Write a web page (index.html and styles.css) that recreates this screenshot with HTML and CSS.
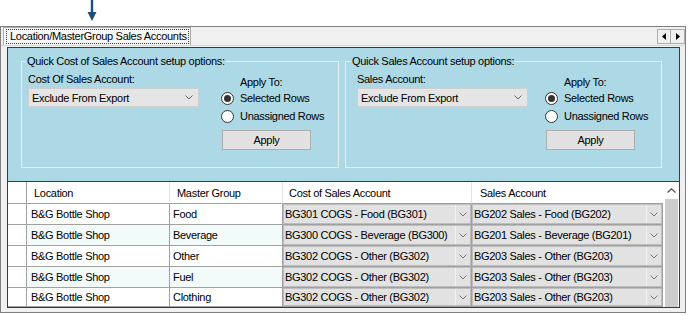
FILE: index.html
```html
<!DOCTYPE html>
<html>
<head>
<meta charset="utf-8">
<link rel="stylesheet" href="styles.css">
</head>
<body>
<div class="pointer">
  <svg width="12" height="22" viewBox="0 0 12 22"><line x1="6" y1="0" x2="6" y2="14" stroke="#1f4e79" stroke-width="2.4"/><polygon points="1.5,12 10.5,12 6,21" fill="#1f4e79"/></svg>
</div>
<div class="window">
  <div class="tabstrip">
    <div class="tab"><span class="focus">Location/MasterGroup Sales Accounts</span></div>
    <div class="scroll-btns">
      <div class="sbtn"><svg width="5" height="7" viewBox="0 0 5 7"><polygon points="4,0 4,7 0,3.5" fill="#000"/></svg></div>
      <div class="sbtn"><svg width="5" height="7" viewBox="0 0 5 7"><polygon points="1,0 1,7 5,3.5" fill="#000"/></svg></div>
    </div>
  </div>
  <div class="tabpage">
    <div class="panel">
      <div class="options">
        <fieldset class="group group-left">
          <legend class="legend-left">Quick Cost of Sales Account setup options:</legend>
          <div class="group-body gap-left">
            <div class="acct-col">
              <div class="lbl">Cost Of Sales Account:</div>
              <div class="combo"><span>Exclude From Export</span><svg class="chev" width="8" height="5" viewBox="0 0 8 5"><polyline points="0.5,0.5 4,4 7.5,0.5" fill="none" stroke="#666" stroke-width="1"/></svg></div>
            </div>
            <div class="apply-col">
              <div class="apply-to">Apply To:</div>
              <div class="radio-row"><span class="radio checked"></span><span>Selected Rows</span></div>
              <div class="radio-row"><span class="radio"></span><span>Unassigned Rows</span></div>
              <div class="button">Apply</div>
            </div>
          </div>
        </fieldset>
        <fieldset class="group group-right">
          <legend class="legend-right">Quick Sales Account setup options:</legend>
          <div class="group-body gap-right">
            <div class="acct-col">
              <div class="lbl">Sales Account:</div>
              <div class="combo"><span>Exclude From Export</span><svg class="chev" width="8" height="5" viewBox="0 0 8 5"><polyline points="0.5,0.5 4,4 7.5,0.5" fill="none" stroke="#666" stroke-width="1"/></svg></div>
            </div>
            <div class="apply-col">
              <div class="apply-to">Apply To:</div>
              <div class="radio-row"><span class="radio checked"></span><span>Selected Rows</span></div>
              <div class="radio-row"><span class="radio"></span><span>Unassigned Rows</span></div>
              <div class="button">Apply</div>
            </div>
          </div>
        </fieldset>
      </div>
      <div class="grid-area">
        <div class="grid">
          <div class="row head">
            <div class="c c0"></div>
            <div class="c c1">Location</div>
            <div class="c c2">Master Group</div>
            <div class="c c3">Cost of Sales Account</div>
            <div class="c c4">Sales Account</div>
          </div>
          <div class="row">
            <div class="c c0"></div>
            <div class="c c1">B&amp;G Bottle Shop</div>
            <div class="c c2">Food</div>
            <div class="c c3 cc"><div class="cbo"><span class="cbo-text">BG301 COGS - Food (BG301)</span><span class="cbo-btn"><svg width="8" height="5" viewBox="0 0 8 5"><polyline points="0.5,0.5 4,4 7.5,0.5" fill="none" stroke="#777" stroke-width="1"/></svg></span></div></div>
            <div class="c c4 cc"><div class="cbo"><span class="cbo-text">BG202 Sales - Food (BG202)</span><span class="cbo-btn"><svg width="8" height="5" viewBox="0 0 8 5"><polyline points="0.5,0.5 4,4 7.5,0.5" fill="none" stroke="#777" stroke-width="1"/></svg></span></div></div>
          </div>
          <div class="row alt">
            <div class="c c0"></div>
            <div class="c c1">B&amp;G Bottle Shop</div>
            <div class="c c2">Beverage</div>
            <div class="c c3 cc"><div class="cbo"><span class="cbo-text">BG300 COGS - Beverage (BG300)</span><span class="cbo-btn"><svg width="8" height="5" viewBox="0 0 8 5"><polyline points="0.5,0.5 4,4 7.5,0.5" fill="none" stroke="#777" stroke-width="1"/></svg></span></div></div>
            <div class="c c4 cc"><div class="cbo"><span class="cbo-text">BG201 Sales - Beverage (BG201)</span><span class="cbo-btn"><svg width="8" height="5" viewBox="0 0 8 5"><polyline points="0.5,0.5 4,4 7.5,0.5" fill="none" stroke="#777" stroke-width="1"/></svg></span></div></div>
          </div>
          <div class="row">
            <div class="c c0"></div>
            <div class="c c1">B&amp;G Bottle Shop</div>
            <div class="c c2">Other</div>
            <div class="c c3 cc"><div class="cbo"><span class="cbo-text">BG302 COGS - Other (BG302)</span><span class="cbo-btn"><svg width="8" height="5" viewBox="0 0 8 5"><polyline points="0.5,0.5 4,4 7.5,0.5" fill="none" stroke="#777" stroke-width="1"/></svg></span></div></div>
            <div class="c c4 cc"><div class="cbo"><span class="cbo-text">BG203 Sales - Other (BG203)</span><span class="cbo-btn"><svg width="8" height="5" viewBox="0 0 8 5"><polyline points="0.5,0.5 4,4 7.5,0.5" fill="none" stroke="#777" stroke-width="1"/></svg></span></div></div>
          </div>
          <div class="row alt">
            <div class="c c0"></div>
            <div class="c c1">B&amp;G Bottle Shop</div>
            <div class="c c2">Fuel</div>
            <div class="c c3 cc"><div class="cbo"><span class="cbo-text">BG302 COGS - Other (BG302)</span><span class="cbo-btn"><svg width="8" height="5" viewBox="0 0 8 5"><polyline points="0.5,0.5 4,4 7.5,0.5" fill="none" stroke="#777" stroke-width="1"/></svg></span></div></div>
            <div class="c c4 cc"><div class="cbo"><span class="cbo-text">BG203 Sales - Other (BG203)</span><span class="cbo-btn"><svg width="8" height="5" viewBox="0 0 8 5"><polyline points="0.5,0.5 4,4 7.5,0.5" fill="none" stroke="#777" stroke-width="1"/></svg></span></div></div>
          </div>
          <div class="row last">
            <div class="c c0"></div>
            <div class="c c1">B&amp;G Bottle Shop</div>
            <div class="c c2">Clothing</div>
            <div class="c c3 cc"><div class="cbo"><span class="cbo-text">BG302 COGS - Other (BG302)</span><span class="cbo-btn"><svg width="8" height="5" viewBox="0 0 8 5"><polyline points="0.5,0.5 4,4 7.5,0.5" fill="none" stroke="#777" stroke-width="1"/></svg></span></div></div>
            <div class="c c4 cc"><div class="cbo"><span class="cbo-text">BG203 Sales - Other (BG203)</span><span class="cbo-btn"><svg width="8" height="5" viewBox="0 0 8 5"><polyline points="0.5,0.5 4,4 7.5,0.5" fill="none" stroke="#777" stroke-width="1"/></svg></span></div></div>
          </div>
        </div>
        <div class="vscroll">
          <div class="up"><svg width="9" height="5" viewBox="0 0 9 5"><polyline points="0.5,4.5 4.5,0.8 8.5,4.5" fill="none" stroke="#555" stroke-width="1.3"/></svg></div>
          <div class="thumb"></div>
        </div>
      </div>
    </div>
  </div>
</div>
</body>
</html>
```
FILE: styles.css
```css
* { box-sizing: border-box; }
html, body { margin: 0; padding: 0; background: #ffffff; }
body {
  font-family: "Liberation Sans", Arial, sans-serif;
  font-size: 11px;
  letter-spacing: -0.3px;
  color: #000;
}

.pointer { height: 26px; padding-left: 86px; }
.pointer svg { display: block; }

.window {
  width: 686px;
  height: 287px;
  border: 1px solid #7f7f7f;
  background: #f0f0f0;
  display: flex;
  flex-direction: column;
}

.tabstrip { height: 18px; display: flex; justify-content: space-between; }
.tab {
  margin-left: 2px;
  width: 188px;
  height: 18px;
  border: 1px solid #acacac;
  border-bottom: none;
  background: #f7f7f7;
  padding: 1px 1px 1px 2px;
}
.focus {
  display: block;
  height: 15px;
  border: 1px dotted #444;
  line-height: 13px;
  padding-left: 3px;
  white-space: nowrap;
}
.scroll-btns { display: flex; margin-top: 2px; }
.sbtn {
  width: 14px;
  height: 15px;
  border: 1px solid #adadad;
  background: #f0f0f0;
  display: flex;
  align-items: center;
  justify-content: center;
}
.sbtn + .sbtn { border-left: none; width: 14px; }

.tabpage {
  flex: 1;
  border-top: 1px solid #d6d6d6;
  padding: 1px 5px 4px 6px;
}
.panel {
  width: 673px;
  height: 261px;
  border: 1px solid #3a3a3a;
  display: flex;
  flex-direction: column;
}

.options {
  height: 133px;
  background: #add8e6;
  padding: 7px 0 0 13px;
  display: flex;
  gap: 6px;
}
.group {
  margin: 0;
  height: 113px;
  border: 1px solid #e4eef1;
  padding: 6px 0 0 0;
  min-width: 0;
}
.group-left { width: 318px; padding-left: 6px; }
.group-right { width: 317px; padding-left: 11px; }
legend {
  padding: 0 1px;
  line-height: 12px;
  white-space: nowrap;
}
.legend-left { margin-left: -2px; }
.legend-right { margin-left: -6px; }

.group-body { display: flex; }
.gap-left { gap: 22px; }
.gap-right { gap: 17px; }

.acct-col { width: 171px; }
.lbl { line-height: 13px; }
.combo {
  margin-top: 2px;
  height: 19px;
  background: #e5e5e5;
  border: 1px solid #cfcfcf;
  display: flex;
  align-items: center;
  justify-content: space-between;
  padding: 0 5px 0 3px;
}
.chev { display: block; }

.apply-col { width: 90px; }
.apply-to { margin-top: 3px; line-height: 13px; padding-left: 19px; }
.radio-row { height: 18px; display: flex; align-items: center; gap: 6px; white-space: nowrap; }
.radio {
  width: 13px;
  height: 13px;
  border-radius: 50%;
  border: 1px solid #333;
  background: #fff;
  flex: none;
  display: flex;
  align-items: center;
  justify-content: center;
}
.radio.checked::after {
  content: "";
  width: 7px;
  height: 7px;
  border-radius: 50%;
  background: #333;
}
.button {
  margin-top: 5px;
  margin-left: 1px;
  width: 89px;
  height: 20px;
  background: #e1e1e1;
  border: 1px solid #adadad;
  display: flex;
  align-items: center;
  justify-content: center;
}

.grid-area {
  flex: 1;
  border-top: 1px solid #3a3a3a;
  display: flex;
  background: #fff;
}
.grid { width: 655px; display: flex; flex-direction: column; }
.row { display: flex; height: 21px; }
.row.head { height: 22px; }
.row.last { height: 19px; }
.c {
  border-right: 1px solid #a0a0a0;
  border-bottom: 1px solid #a0a0a0;
  display: flex;
  align-items: center;
  white-space: nowrap;
  overflow: hidden;
  padding-left: 4px;
  background: #fff;
}
.row.alt .c1, .row.alt .c2 { background: #f2fbf9; }
.head .c { border-right-color: #e4e4e4; padding-left: 7px; }
.head .c0 { border-right-color: #a0a0a0; }
.head .c3 { padding-left: 6px; }
.head .c4 { padding-left: 8px; border-right: none; width: 191px; }
.c0 { width: 19px; padding-left: 0; }
.c1 { width: 143px; }
.c2 { width: 113px; padding-left: 3px; }
.c3 { width: 189px; }
.c4 { width: 191px; }
.cc { padding: 0; align-items: stretch; }
.cbo {
  flex: 1;
  display: flex;
  background: #e2e2e2;
  border: 1px solid #bdbdbd;
}
.cbo-text { flex: 1; display: flex; align-items: center; padding-left: 1px; overflow: hidden; }
.cbo-btn {
  width: 15px;
  border-left: 1px solid #f2f2f2;
  display: flex;
  align-items: center;
  justify-content: center;
}

.vscroll {
  width: 16px;
  display: flex;
  flex-direction: column;
  padding: 0 1px 0 2px;
  background: #fff;
}
.up { height: 17px; display: flex; align-items: center; justify-content: center; }
.thumb { flex: 1; background: #cdcdcd; }
```
